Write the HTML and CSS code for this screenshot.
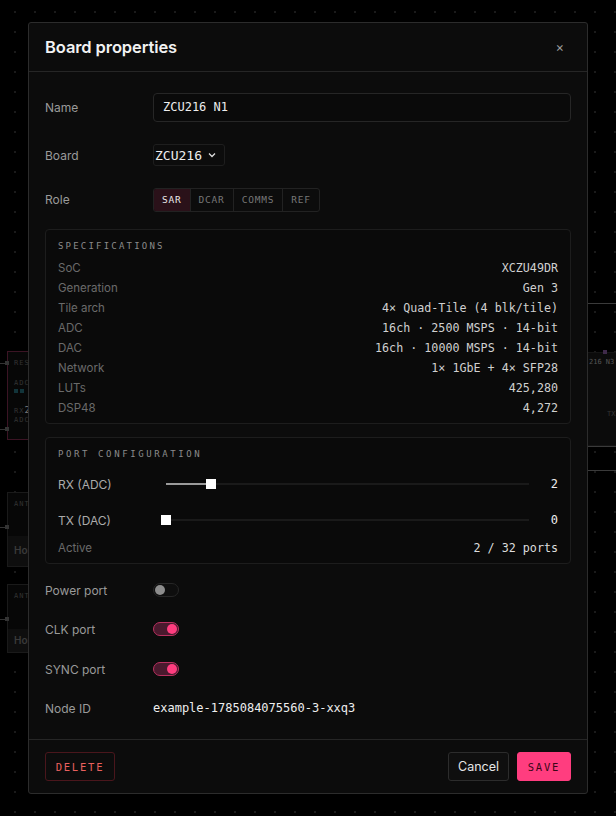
FILE: index.html
```html
<!DOCTYPE html>
<html lang="en">
<head>
  <meta charset="UTF-8" />
  <title>Board properties</title>
  <link rel="stylesheet" href="styles.css">
</head>
<body>

  <div class="canvas">
    <div class="node node-sar">
      <span class="node-pin pin-a"></span>
      <span class="node-pin pin-b"></span>
      <div class="node-line">RES</div>
      <div class="node-line">ADC</div>
      <div class="node-chips"><i></i><i></i></div>
      <div class="node-line node-rx">RX<b>2</b></div>
      <div class="node-line">ADC1</div>
    </div>
    <div class="node node-ant node-ant-1">
      <span class="node-pin pin-c"></span>
      <div class="node-line">ANT</div>
      <div class="node-band">Horn</div>
    </div>
    <div class="node node-ant node-ant-2">
      <span class="node-pin pin-c"></span>
      <div class="node-line">ANT</div>
      <div class="node-band">Horn</div>
    </div>
    <div class="wire wire-1"></div>
    <div class="wire wire-2"></div>
    <div class="wire wire-3"></div>
    <div class="node node-right">
      <span class="node-dot"></span>
      <div class="node-title">216 N3</div>
      <div class="node-tx">TX</div>
    </div>
  </div>

  <div class="modal">
    <header class="modal-head">
      <h1>Board properties</h1>
      <span class="close">&times;</span>
    </header>

    <div class="modal-body">
      <div class="row row-name">
        <label>Name</label>
        <div class="input">ZCU216 N1</div>
      </div>

      <div class="row row-board">
        <label>Board</label>
        <div class="select">ZCU216
          <svg width="10" height="10" viewBox="0 0 10 10"><path d="M2 3.5 L5 6.5 L8 3.5" fill="none" stroke="#ddd" stroke-width="1.3"/></svg>
        </div>
      </div>

      <div class="row row-role">
        <label>Role</label>
        <div class="segmented">
          <span class="seg active">SAR</span>
          <span class="seg">DCAR</span>
          <span class="seg">COMMS</span>
          <span class="seg">REF</span>
        </div>
      </div>

      <section class="panel panel-specs">
        <h4>Specifications</h4>
        <div class="spec"><span>SoC</span><em>XCZU49DR</em></div>
        <div class="spec"><span>Generation</span><em>Gen 3</em></div>
        <div class="spec"><span>Tile arch</span><em>4× Quad-Tile (4 blk/tile)</em></div>
        <div class="spec"><span>ADC</span><em>16ch · 2500 MSPS · 14-bit</em></div>
        <div class="spec"><span>DAC</span><em>16ch · 10000 MSPS · 14-bit</em></div>
        <div class="spec"><span>Network</span><em>1× 1GbE + 4× SFP28</em></div>
        <div class="spec"><span>LUTs</span><em>425,280</em></div>
        <div class="spec"><span>DSP48</span><em>4,272</em></div>
      </section>

      <section class="panel panel-ports">
        <h4>Port configuration</h4>
        <div class="port port-rx">
          <span class="port-label">RX (ADC)</span>
          <div class="slider">
            <div class="slider-fill" style="width: 12.5%"></div>
            <div class="slider-thumb" style="left: 12.5%"></div>
          </div>
          <em>2</em>
        </div>
        <div class="port port-tx">
          <span class="port-label">TX (DAC)</span>
          <div class="slider">
            <div class="slider-fill" style="width: 0%"></div>
            <div class="slider-thumb" style="left: 0%"></div>
          </div>
          <em>0</em>
        </div>
        <div class="spec spec-active"><span>Active</span><em>2 / 32 ports</em></div>
      </section>

      <div class="row row-toggle row-power">
        <label>Power port</label>
        <span class="toggle"></span>
      </div>
      <div class="row row-toggle row-clk">
        <label>CLK port</label>
        <span class="toggle on"></span>
      </div>
      <div class="row row-toggle row-sync">
        <label>SYNC port</label>
        <span class="toggle on"></span>
      </div>

      <div class="row row-node">
        <label>Node ID</label>
        <span class="mono">example-1785084075560-3-xxq3</span>
      </div>
    </div>

    <footer class="modal-foot">
      <button class="btn btn-delete">Delete</button>
      <div class="foot-right">
        <button class="btn btn-cancel">Cancel</button>
        <button class="btn btn-save">Save</button>
      </div>
    </footer>
  </div>

</body>
</html>
```

FILE: styles.css
```css
:root {
  --bg: #000;
  --modal: #0c0c0c;
  --line: #262626;
  --panel-line: #1d1d1d;
  --label: #9a9a9a;
  --dim: #6a6a6a;
  --text: #e8e8e8;
  --pink: #ff3d7f;
  --mono: "DejaVu Sans Mono", "Liberation Mono", monospace;
}

* {
  box-sizing: border-box;
  margin: 0;
  padding: 0;
}

html, body {
  height: 100%;
}

body {
  font-family: Inter, "Noto Sans", sans-serif;
  background-color: var(--bg);
  background-image: radial-gradient(#1a1a1a 0.8px, transparent 1px);
  background-size: 20px 20px;
  background-position: 5px 2px;
  color: var(--text);
  padding-top: 22px;
  overflow: hidden;
  position: relative;
}

/* background canvas (dimmed) */
.canvas {
  position: absolute;
  inset: 0;
}

.node {
  position: absolute;
  border: 1px solid #1a1a1a;
  background: #070707;
  font-family: var(--mono);
  font-size: 7px;
  color: #333;
  letter-spacing: 1px;
}

.node-sar {
  left: 7px;
  top: 351px;
  width: 40px;
  height: 89px;
  border-color: #3b1424;
  padding: 6px 0 0 6px;
}

.node-line {
  height: 10px;
  line-height: 10px;
}

.node-sar .node-line:nth-of-type(2) {
  margin-top: 10px;
}

.node-chips {
  display: flex;
  gap: 2px;
  margin: 1px 0 12px;
}

.node-chips i {
  width: 4px;
  height: 4px;
  background: #12343a;
}

.node-rx b {
  color: #777;
  font-weight: normal;
  font-size: 9px;
}

.node-pin {
  position: absolute;
  left: -3px;
  width: 4px;
  height: 4px;
  background: #333;
}

.node-pin::before {
  content: "";
  position: absolute;
  right: 4px;
  top: 1.5px;
  width: 6px;
  height: 1px;
  background: #333;
}

.pin-a { top: 9px; }
.pin-b { top: 75px; }
.pin-c { top: 32px; }

.node-ant {
  left: 7px;
  width: 40px;
  padding: 6px 0 0 6px;
}

.node-ant-1 { top: 492px; height: 75px; }
.node-ant-2 { top: 584px; height: 69px; }

.node-band {
  position: absolute;
  left: 0;
  right: 0;
  bottom: 0;
  height: 30px;
  background: #0e0e0e;
  font-family: Inter, sans-serif;
  font-size: 10px;
  letter-spacing: 0;
  color: #3a3a3a;
  font-weight: 600;
  padding: 8px 0 0 6px;
}

.node-ant-2 .node-band { height: 23px; padding-top: 5px; }

.wire {
  position: absolute;
  left: 588px;
  right: 0;
  height: 1px;
  background: #3a3a3a;
}

.wire-1 { top: 303px; }
.wire-2 { top: 446px; }
.wire-3 { top: 470px; }

.node-right {
  left: 580px;
  top: 352px;
  width: 60px;
  height: 94px;
  background: #0b0b0b;
  border-color: #141414;
}

.node-dot {
  position: absolute;
  left: 22px;
  top: -3px;
  width: 4px;
  height: 4px;
  background: #3f2a4a;
}

.node-title {
  position: absolute;
  left: 8px;
  top: 5px;
  font-size: 7px;
  letter-spacing: 0;
  color: #555;
}

.node-tx {
  position: absolute;
  left: 26px;
  top: 57px;
  font-size: 7px;
  letter-spacing: 0;
  color: #333;
}

/* modal */
.modal {
  position: relative;
  z-index: 1;
  width: 560px;
  margin: 0 auto;
  background: var(--modal);
  border: 1px solid #2c2c2c;
  border-radius: 3px;
}

.modal-head {
  height: 49px;
  display: flex;
  align-items: center;
  justify-content: space-between;
  padding: 0 23px 0 16px;
  border-bottom: 1px solid var(--line);
}

.modal-head h1 {
  font-size: 16.5px;
  font-weight: 600;
  color: #f2f2f2;
  letter-spacing: -0.1px;
}

.close {
  color: #999;
  font-size: 13px;
}

.modal-body {
  padding: 21px 16px 23px;
}

.row {
  display: flex;
  align-items: center;
}

.row label {
  width: 108px;
  flex: none;
  font-size: 12px;
  color: var(--label);
}

.row-name { height: 29px; }
.row-board { height: 22px; margin-top: 22px; }
.row-role { height: 24px; margin-top: 22px; }
.row-power { height: 14px; margin-top: 19px; }
.row-clk { height: 14px; margin-top: 25px; }
.row-sync { height: 14px; margin-top: 26px; }
.row-node { height: 16px; margin-top: 24px; }

.row-role label { padding-bottom: 2px; }

.input {
  flex: 1;
  height: 29px;
  border: 1px solid var(--line);
  border-radius: 4px;
  background: #0a0a0a;
  font-family: var(--mono);
  font-size: 12px;
  line-height: 27px;
  padding-left: 9px;
  color: #eee;
}

.select {
  height: 22px;
  display: flex;
  align-items: center;
  gap: 5px;
  padding: 0 7px 0 1px;
  border: 1px solid #1e1e1e;
  border-radius: 3px;
  font-family: var(--mono);
  font-size: 13px;
  color: #eee;
}

.segmented {
  display: flex;
  height: 24px;
  border: 1px solid #222;
  border-radius: 3px;
  overflow: hidden;
}

.seg {
  font-family: var(--mono);
  font-size: 9.5px;
  letter-spacing: 0.8px;
  color: #777;
  padding: 0 8px;
  line-height: 21px;
  border-left: 1px solid #222;
}

.seg:first-child { border-left: none; }

.seg.active {
  background: #2a1119;
  color: #e6e6e6;
}

.panel {
  border: 1px solid var(--panel-line);
  border-radius: 4px;
  background: #0a0a0a;
  padding: 9px 12px 5px 12px;
}

.panel-specs { margin-top: 17px; }
.panel-ports { margin-top: 13px; }

.panel h4 {
  font-family: var(--mono);
  font-weight: normal;
  font-size: 9px;
  line-height: 14px;
  letter-spacing: 2.2px;
  text-transform: uppercase;
  color: #8a8a8a;
  margin-bottom: 5px;
}

.panel-ports h4 { letter-spacing: 2.6px; }

.spec {
  display: flex;
  justify-content: space-between;
  align-items: center;
  height: 20px;
}

.spec span {
  font-size: 11.5px;
  color: var(--dim);
}

.spec em {
  font-style: normal;
  font-family: var(--mono);
  font-size: 11.7px;
  color: #d0d0d0;
}

.port {
  display: flex;
  align-items: center;
  height: 20px;
}

.port-rx { margin-top: 13px; }
.port-tx { margin-top: 16px; }

.port-label {
  width: 108px;
  flex: none;
  font-size: 12px;
  color: #aaa;
}

.slider {
  position: relative;
  flex: 1;
  height: 2px;
  background: #1a1a1a;
  margin-right: 22px;
}

.slider-fill {
  height: 2px;
  background: #9a9a9a;
}

.slider-thumb {
  position: absolute;
  top: -4px;
  width: 10px;
  height: 10px;
  margin-left: -5px;
  background: #fff;
}

.port em {
  font-style: normal;
  font-family: var(--mono);
  font-size: 12px;
  color: #eee;
}

.spec-active { margin-top: 8px; }
.spec-active em { color: #ddd; }

.toggle {
  position: relative;
  width: 26px;
  height: 14px;
  border-radius: 7px;
  border: 1px solid #262626;
  background: #0e0e0e;
}

.toggle::after {
  content: "";
  position: absolute;
  left: 1px;
  top: 1px;
  width: 10px;
  height: 10px;
  border-radius: 50%;
  background: #8c8c8c;
}

.toggle.on {
  background: #4a1a2e;
  border-color: #b8305f;
}

.toggle.on::after {
  left: 13px;
  background: var(--pink);
}

.mono {
  font-family: var(--mono);
  font-size: 12px;
  color: #eee;
}

.modal-foot {
  display: flex;
  justify-content: space-between;
  align-items: center;
  padding: 12px 16px;
  border-top: 1px solid var(--line);
}

.foot-right {
  display: flex;
  gap: 8px;
}

.btn {
  height: 29px;
  border-radius: 3px;
  cursor: pointer;
  font-family: var(--mono);
  font-size: 10.5px;
  letter-spacing: 1.8px;
  text-transform: uppercase;
}

.btn-delete {
  width: 70px;
  background: transparent;
  border: 1px solid #4a161c;
  color: #e8605e;
}

.btn-cancel {
  width: 61px;
  background: #0f0f0f;
  border: 1px solid #2c2c2c;
  color: #e6e6e6;
  font-family: Inter, sans-serif;
  font-size: 12.5px;
  letter-spacing: 0;
  text-transform: none;
}

.btn-save {
  width: 54px;
  background: var(--pink);
  border: 1px solid var(--pink);
  color: #3a0616;
  font-weight: normal;
}
```
